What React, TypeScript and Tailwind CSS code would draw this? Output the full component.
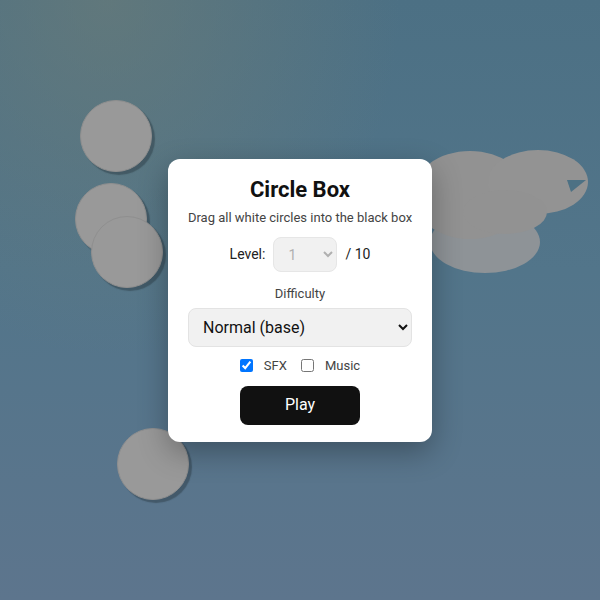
import React from "react";

const circles = [
  { x: 80, y: 100 },
  { x: 75, y: 183 },
  { x: 91, y: 216 },
  { x: 117, y: 428 },
];

export default function App() {
  return (
    <div
      className="relative h-screen w-full overflow-hidden bg-[linear-gradient(180deg,#4c7084_0%,#52758a_45%,#5d758d_100%)]"
      style={{ fontFamily: "Roboto, 'Noto Sans', Arial, sans-serif" }}
    >
      <div className="absolute inset-0 bg-[radial-gradient(ellipse_at_18%_0%,rgba(110,125,118,0.6)_0%,rgba(110,125,118,0)_42%)]" />

      {circles.map((c, i) => (
        <div
          key={i}
          className="absolute h-[72px] w-[72px] rounded-full border border-[#8f8f8f] bg-[#999999] shadow-[3px_3px_1px_rgba(40,55,65,0.45)]"
          style={{ left: c.x, top: c.y }}
        />
      ))}

      <svg className="absolute left-[400px] top-[130px]" width="200" height="160" viewBox="400 130 200 160">
        <ellipse cx="485" cy="242" rx="55" ry="31" fill="#8e9397" />
        <ellipse cx="470" cy="195" rx="58" ry="44" fill="#929292" />
        <ellipse cx="538" cy="182" rx="50" ry="32" fill="#939393" />
        <ellipse cx="505" cy="212" rx="42" ry="22" fill="#929292" />
        <polygon points="567,180 586,180 571,192" fill="#4d7184" />
      </svg>

      <div className="relative flex h-full w-full items-center justify-center">
        <div className="flex w-[264px] flex-col items-center rounded-xl bg-white px-5 pb-[17px] pt-[17px] shadow-[0_10px_30px_rgba(0,0,0,0.3)]">
          <h1 className="text-[22px] font-bold leading-[28px] text-[#111111]">Circle Box</h1>
          <p className="mt-[5px] whitespace-nowrap text-[13px] leading-[18px] text-[#444444]">
            Drag all white circles into the black box
          </p>
          <div className="mt-[10px] flex h-[36px] items-center gap-[8px] text-[14px] text-[#222222]">
            <span>Level:</span>
            <select
              disabled
              className="h-[35px] w-[64px] rounded-lg border border-[#e6e6e6] bg-[#f1f1f1] pl-[10px] text-[14px] text-[#b0b0b0]"
            >
              <option>1</option>
            </select>
            <span>/ 10</span>
          </div>
          <div className="mt-[12px] text-[13px] leading-[18px] text-[#444444]">Difficulty</div>
          <select
            defaultValue="normal"
            className="mt-[5px] h-[39px] w-[224px] rounded-lg border border-[#e3e3e3] bg-[#f1f1f1] pl-[10px] pr-[6px] text-[16px] text-[#111111]"
          >
            <option value="easy">Easy</option>
            <option value="normal">Normal (base)</option>
            <option value="hard">Hard</option>
          </select>
          <div className="mt-[10px] flex h-[18px] items-center gap-[14px] text-[13px] text-[#444444]">
            <label className="flex items-center gap-[11px]">
              <input type="checkbox" defaultChecked className="h-[13px] w-[13px]" />
              <span>SFX</span>
            </label>
            <label className="flex items-center gap-[11px]">
              <input type="checkbox" className="h-[13px] w-[13px]" />
              <span>Music</span>
            </label>
          </div>
          <button className="mt-[11px] h-[39px] w-[120px] rounded-lg bg-[#111111] text-[16px] text-white">
            Play
          </button>
        </div>
      </div>
    </div>
  );
}
